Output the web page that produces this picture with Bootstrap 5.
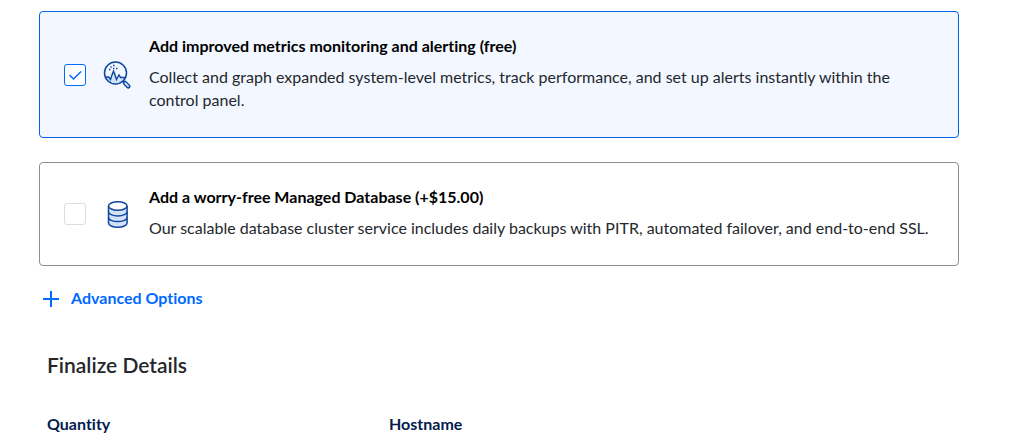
<!DOCTYPE html>
<html lang="en">
<head>
<meta charset="utf-8">
<meta name="viewport" content="width=device-width, initial-scale=1">
<title>Create Droplet</title>
<link href="https://cdn.jsdelivr.net/npm/bootstrap@5.3.0/dist/css/bootstrap.min.css" rel="stylesheet">
<style>
  body { font-family: Lato, "Liberation Sans", sans-serif; font-size: 16px; line-height: 23px; font-variant-ligatures: none; color: #24272c; background: #fff; }
  .page { padding: 11px 61px 0 39px; }
  .option { border: 1px solid #8e8e8e; border-radius: 4px; padding: 23px 16px 23px 24px; cursor: pointer; }
  .option.selected { background: #f3f7ff; border-color: #0061eb; }
  .option .form-check-input { width: 22px; height: 22px; margin: 0; border: 1px solid #dcdcdc; border-radius: 3px; background-color: #fff; }
  .option .form-check-input:checked { border-color: #0069ff; background-size: 20px; background-image: url("data:image/svg+xml,%3csvg xmlns='http://www.w3.org/2000/svg' viewBox='0 0 20 20'%3e%3cpath fill='none' stroke='%230069ff' stroke-width='1.5' d='M4.500 10l4 4L16 6.500'/%3e%3c/svg%3e"); }
  .option-text { padding-bottom: 3px; }
  .option-title { font-weight: 700; line-height: 22px; color: #000; margin-bottom: 8px; }
  .advanced { color: #0069ff; font-size: 16px; font-variant-ligatures: none; font-weight: 700; line-height: 24px; }
  .section-title { font-size: 21px; line-height: 24px; font-weight: 600; }
  .field-title { font-size: 16px; line-height: 24px; font-weight: 700; color: #031b4e; }
  .details { padding: 43px 0 0 8px; }
  .fields { grid-template-columns: 3fr 5fr; padding-top: 35px; }
</style>
</head>
<body>
<main class="page">
  <label class="option selected d-flex align-items-center gap-3 mb-4" for="monitoring">
    <input class="form-check-input flex-shrink-0" type="checkbox" id="monitoring" checked>
    <svg class="flex-shrink-0" width="31" height="30" viewBox="0 0 31 30" fill="none" stroke="#10479e" stroke-width="1.500" aria-hidden="true">
      <path d="M3 17h4l2.500-5 1 7 3-8 3 9 2.500-5 1.500 2H24a11 11 0 0 1-21 0z" fill="#d3e2fb" stroke="none"/>
      <circle cx="13.500" cy="13" r="11"/>
      <path d="M3 17h3.500l2 2.500 3-8.500 3 8.500 2.500-4.500 1.500 2.500H24" stroke-width="1.400"/>
      <path d="M21 21l1.500 1.500"/>
      <path d="M23 23l3.300 3.300" stroke-width="4.500" stroke-linecap="round"/>
      <path d="M23.200 23.200l2.900 2.900" stroke="#d3e2fb" stroke-width="1.800" stroke-linecap="round"/>
      <path d="M7 9.500h1.500M8.500 7h1.300M11 8.500h1.300M11 5.500h1.500M14 8.500h1.500" stroke-width="1.300"/>
    </svg>
    <span class="option-text">
      <span class="option-title d-block">Add improved metrics monitoring and alerting (free)</span>
      <span class="d-block">Collect and graph expanded system-level metrics, track performance, and set up alerts instantly within the control panel.</span>
    </span>
  </label>

  <label class="option d-flex align-items-center gap-3" for="database">
    <input class="form-check-input flex-shrink-0" type="checkbox" id="database">
    <svg class="flex-shrink-0" width="31" height="30" viewBox="0 0 31 30" fill="none" stroke="#10479e" stroke-width="1.500" aria-hidden="true">
      <path d="M6.500 7v17c0 2.300 4 4.200 9.300 4.200s9.300-1.900 9.300-4.200V7" fill="#d3e2fb"/>
      <ellipse cx="15.800" cy="7" rx="9.300" ry="4.300" fill="#fff"/>
      <path d="M6.500 12.700c0 2.300 4 4.200 9.300 4.200s9.300-1.900 9.300-4.200M6.500 18.400c0 2.300 4 4.200 9.300 4.200s9.300-1.900 9.300-4.200"/>
    </svg>
    <span class="option-text">
      <span class="option-title d-block">Add a worry-free Managed Database (+$15.00)</span>
      <span class="d-block">Our scalable database cluster service includes daily backups with PITR, automated failover, and end-to-end SSL.</span>
    </span>
  </label>

  <button type="button" class="advanced btn btn-link d-flex align-items-center gap-2 text-decoration-none border-0 p-0 ms-1 mt-3 pt-1">
    <svg width="20" height="20" viewBox="0 0 20 20" stroke="#0069ff" stroke-width="2" aria-hidden="true"><path d="M0 11h16M8 3v16"/></svg>
    <span>Advanced Options</span>
  </button>

  <section class="details">
    <h2 class="section-title mb-0">Finalize Details</h2>
    <div class="fields d-grid">
      <h3 class="field-title mb-0">Quantity</h3>
      <h3 class="field-title mb-0">Hostname</h3>
    </div>
  </section>
</main>
<script src="https://cdn.jsdelivr.net/npm/bootstrap@5.3.0/dist/js/bootstrap.bundle.min.js"></script>
</body>
</html>
